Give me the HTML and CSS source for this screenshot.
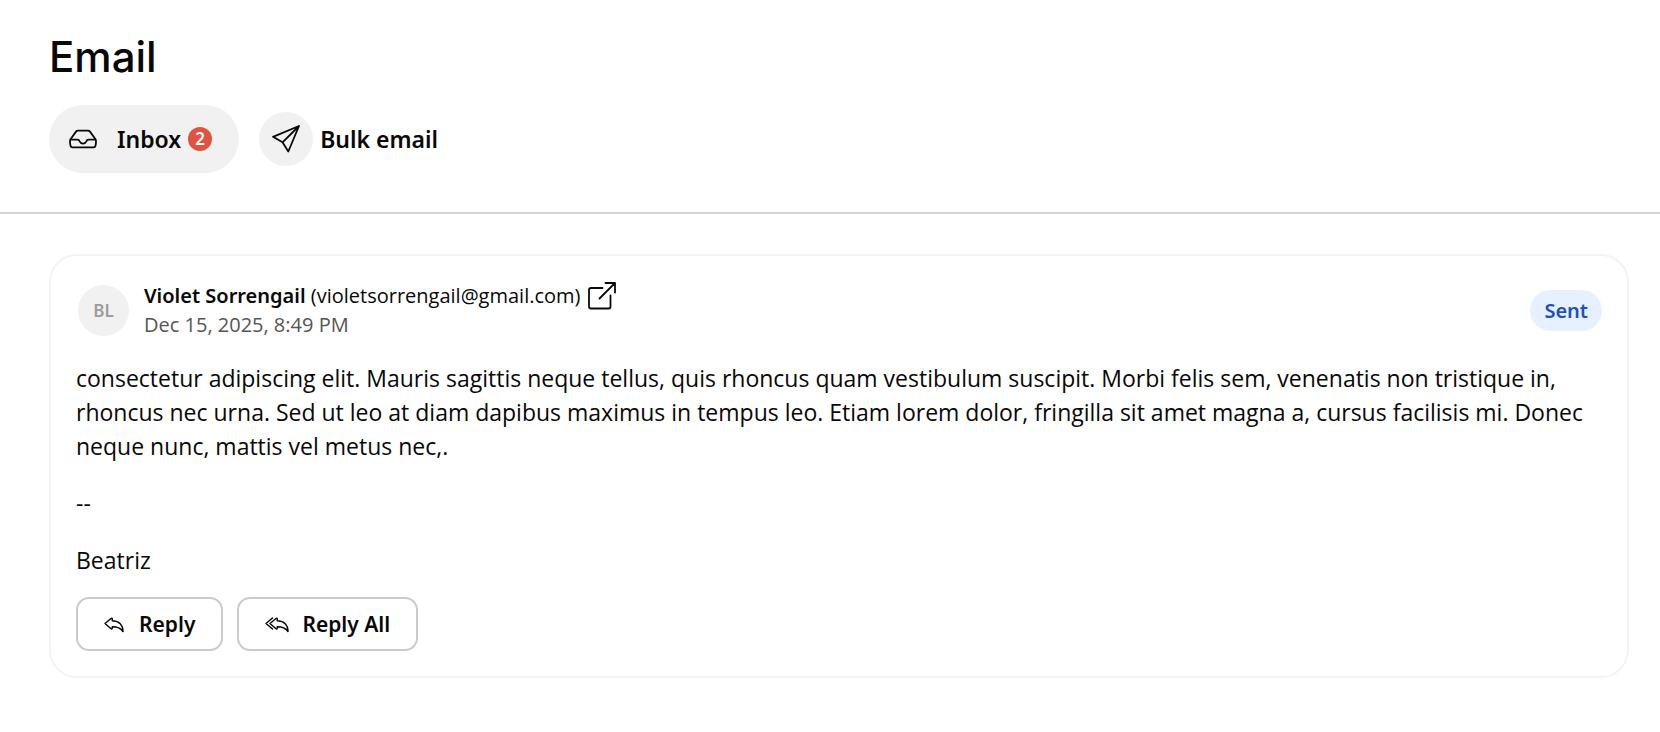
FILE: index.html
```html
<!DOCTYPE html>
<html lang="en">
<head>
  <meta charset="utf-8">
  <meta name="viewport" content="width=device-width, initial-scale=1">
  <title>Email</title>
  <link rel="stylesheet" href="styles.css">
</head>
<body>
  <header class="page-header">
    <h1 class="page-title">Email</h1>
    <nav class="tabs">
      <a class="tab tab-active" href="#inbox">
        <svg class="tab-icon" viewBox="0 0 28 28" aria-hidden="true">
          <path d="M1.500 14.200 L7.200 6.400 Q7.800 5.600 9 5.600 H19 Q20.200 5.600 20.800 6.400 L26.500 14.200 M1.200 14.600 H8.500 Q10 14.600 10.600 16.300 Q11.800 18.600 14 18.600 T17.400 16.300 Q18 14.600 19.500 14.600 H26.800 M1.500 14.200 Q1 15 1 17 Q1 19 1.600 21 Q2 22.400 3.500 22.400 H24.500 Q26 22.400 26.400 21 Q27 19 27 17 Q27 15 26.500 14.200"/>
        </svg>
        <span class="tab-label">Inbox</span>
        <span class="tab-count">2</span>
      </a>
      <a class="tab" href="#bulk">
        <span class="tab-disc">
          <svg class="tab-icon" viewBox="0 0 28 28" aria-hidden="true">
            <path d="M1 11.800 L27 1 L16.300 26.500 L10.500 17.300 Z M10.500 17.300 L27 1"/>
          </svg>
        </span>
        <span class="tab-label">Bulk email</span>
      </a>
    </nav>
  </header>

  <main class="content">
    <article class="message">
      <header class="message-header">
        <span class="avatar">BL</span>
        <div class="sender">
          <div class="sender-line">
            <span><strong>Violet Sorrengail</strong> (violetsorrengail@gmail.com)</span>
            <a class="open-link" href="#open" aria-label="Open message">
              <svg viewBox="0 0 28 28" aria-hidden="true">
                <path d="M14.500 6 H3 Q1 6 1 8 V24.500 Q1 26.500 3 26.500 H20.500 Q22.500 26.500 22.500 24.500 V13.500 M11.500 16.500 L27 1 M17.500 1 H27 V10.500"/>
              </svg>
            </a>
          </div>
          <time class="sent-at" datetime="2025-12-15T20:49">Dec 15, 2025, 8:49 PM</time>
        </div>
        <span class="status">Sent</span>
      </header>
      <div class="message-body">
        <p>consectetur adipiscing elit. Mauris sagittis neque tellus, quis rhoncus quam vestibulum suscipit. Morbi felis sem, venenatis non tristique in, rhoncus nec urna. Sed ut leo at diam dapibus maximus in tempus leo. Etiam lorem dolor, fringilla sit amet magna a, cursus facilisis mi. Donec neque nunc, mattis vel metus nec,.</p>
        <p>--</p>
        <p>Beatriz</p>
      </div>
      <div class="actions">
        <button class="action" type="button">
          <svg class="reply-icon" viewBox="0 0 20 16" aria-hidden="true">
            <path d="M1 7.500 L7 2.500 Q8 1.800 8.300 3 V4.800 C15 5 19 9 19 15.500 C16.500 12 13 10.800 8.300 10.800 V12.200 Q8 13.500 7 12.700 Z"/>
          </svg>
          Reply
        </button>
        <button class="action action-all" type="button">
          <svg class="reply-all-icon" viewBox="0 0 24 16" aria-hidden="true">
            <path d="M5 7.500 L11 2.500 Q12 1.800 12.300 3 V4.800 C19 5 23 9 23 15.500 C20.500 12 17 10.800 12.300 10.800 V12.200 Q12 13.500 11 12.700 Z M7.500 2 L1 7.500 L7.500 13"/>
          </svg>
          Reply All
        </button>
      </div>
    </article>
  </main>
</body>
</html>
```
FILE: styles.css
```css
* {
  box-sizing: border-box;
}

body {
  margin: 0;
  background: #fff;
  color: #080808;
  font-family: "Open Sans", "Noto Sans", sans-serif;
  font-size: 23px;
  line-height: 34px;
}

a {
  color: inherit;
  text-decoration: none;
}

svg {
  display: block;
  overflow: visible;
  fill: none;
  stroke: currentColor;
  stroke-linecap: round;
  stroke-linejoin: round;
}

.page-header {
  padding: 33px 49px 39px;
  border-bottom: 2px solid #d2d2d2;
}

.page-title {
  margin: 0 0 24px;
  font-family: Inter, sans-serif;
  font-size: 42px;
  font-weight: 500;
  line-height: 48px;
}

.tabs {
  display: flex;
  align-items: center;
  gap: 20px;
}

.tab {
  display: flex;
  align-items: center;
  gap: 7px;
}

.tab,
.avatar,
.sender strong,
.status,
.actions {
  font-family: "Noto Sans", sans-serif;
  font-weight: 600;
}

.tab-active {
  height: 68px;
  padding: 0 27px 0 20px;
  border-radius: 34px;
  background: #f1f1f1;
}

.tab-active .tab-icon {
  margin-right: 13px;
}

.tab-icon {
  width: 28px;
  height: 28px;
  stroke-width: 1.8;
}

.tab-disc {
  display: grid;
  place-items: center;
  width: 54px;
  height: 54px;
  border-radius: 50%;
  background: #f1f1f1;
}

.tab-count {
  width: 24px;
  height: 24px;
  border-radius: 50%;
  background: #e25241;
  color: #fff;
  font-size: 17px;
  line-height: 24px;
  text-align: center;
}

.content {
  padding: 40px 31px 41px 49px;
}

.message {
  padding: 25px;
  border: 2px solid #f3f3f3;
  border-radius: 28px;
}

.message-header {
  display: flex;
  align-items: center;
  gap: 15px;
  padding-left: 2px;
}

.avatar {
  width: 51px;
  height: 51px;
  border-radius: 50%;
  background: #f1f1f1;
  color: #9c9c9c;
  font-size: 17px;
  line-height: 51px;
  text-align: center;
}

.sender {
  flex: 1;
  font-size: 20px;
  line-height: 29px;
}

.sender-line {
  display: flex;
  align-items: center;
  gap: 8px;
}

.open-link svg {
  width: 28px;
  height: 28px;
  stroke-width: 1.8;
}

.sent-at {
  display: block;
  color: #555;
}

.status {
  padding: 6px 14px;
  border-radius: 21px;
  background: #e6f0ff;
  color: #2050c0;
  font-size: 20px;
  line-height: 29px;
}

.message-body p {
  margin: 23px 0;
}

.message-body p:first-child {
  margin-top: 22px;
}

.message-body p:last-child {
  margin-bottom: 20px;
}

.actions {
  display: flex;
  gap: 14px;
}

.action {
  display: flex;
  align-items: center;
  gap: 15px;
  height: 54px;
  padding: 0 26px;
  border: 2px solid #cbcbcb;
  border-radius: 13px;
  background: #fff;
  color: inherit;
  font: inherit;
  font-size: 21px;
}

.action-all {
  gap: 13px;
}

.reply-icon {
  width: 20px;
  height: 16px;
  stroke-width: 1.5;
}

.reply-all-icon {
  width: 24px;
  height: 16px;
  stroke-width: 1.5;
}
```
